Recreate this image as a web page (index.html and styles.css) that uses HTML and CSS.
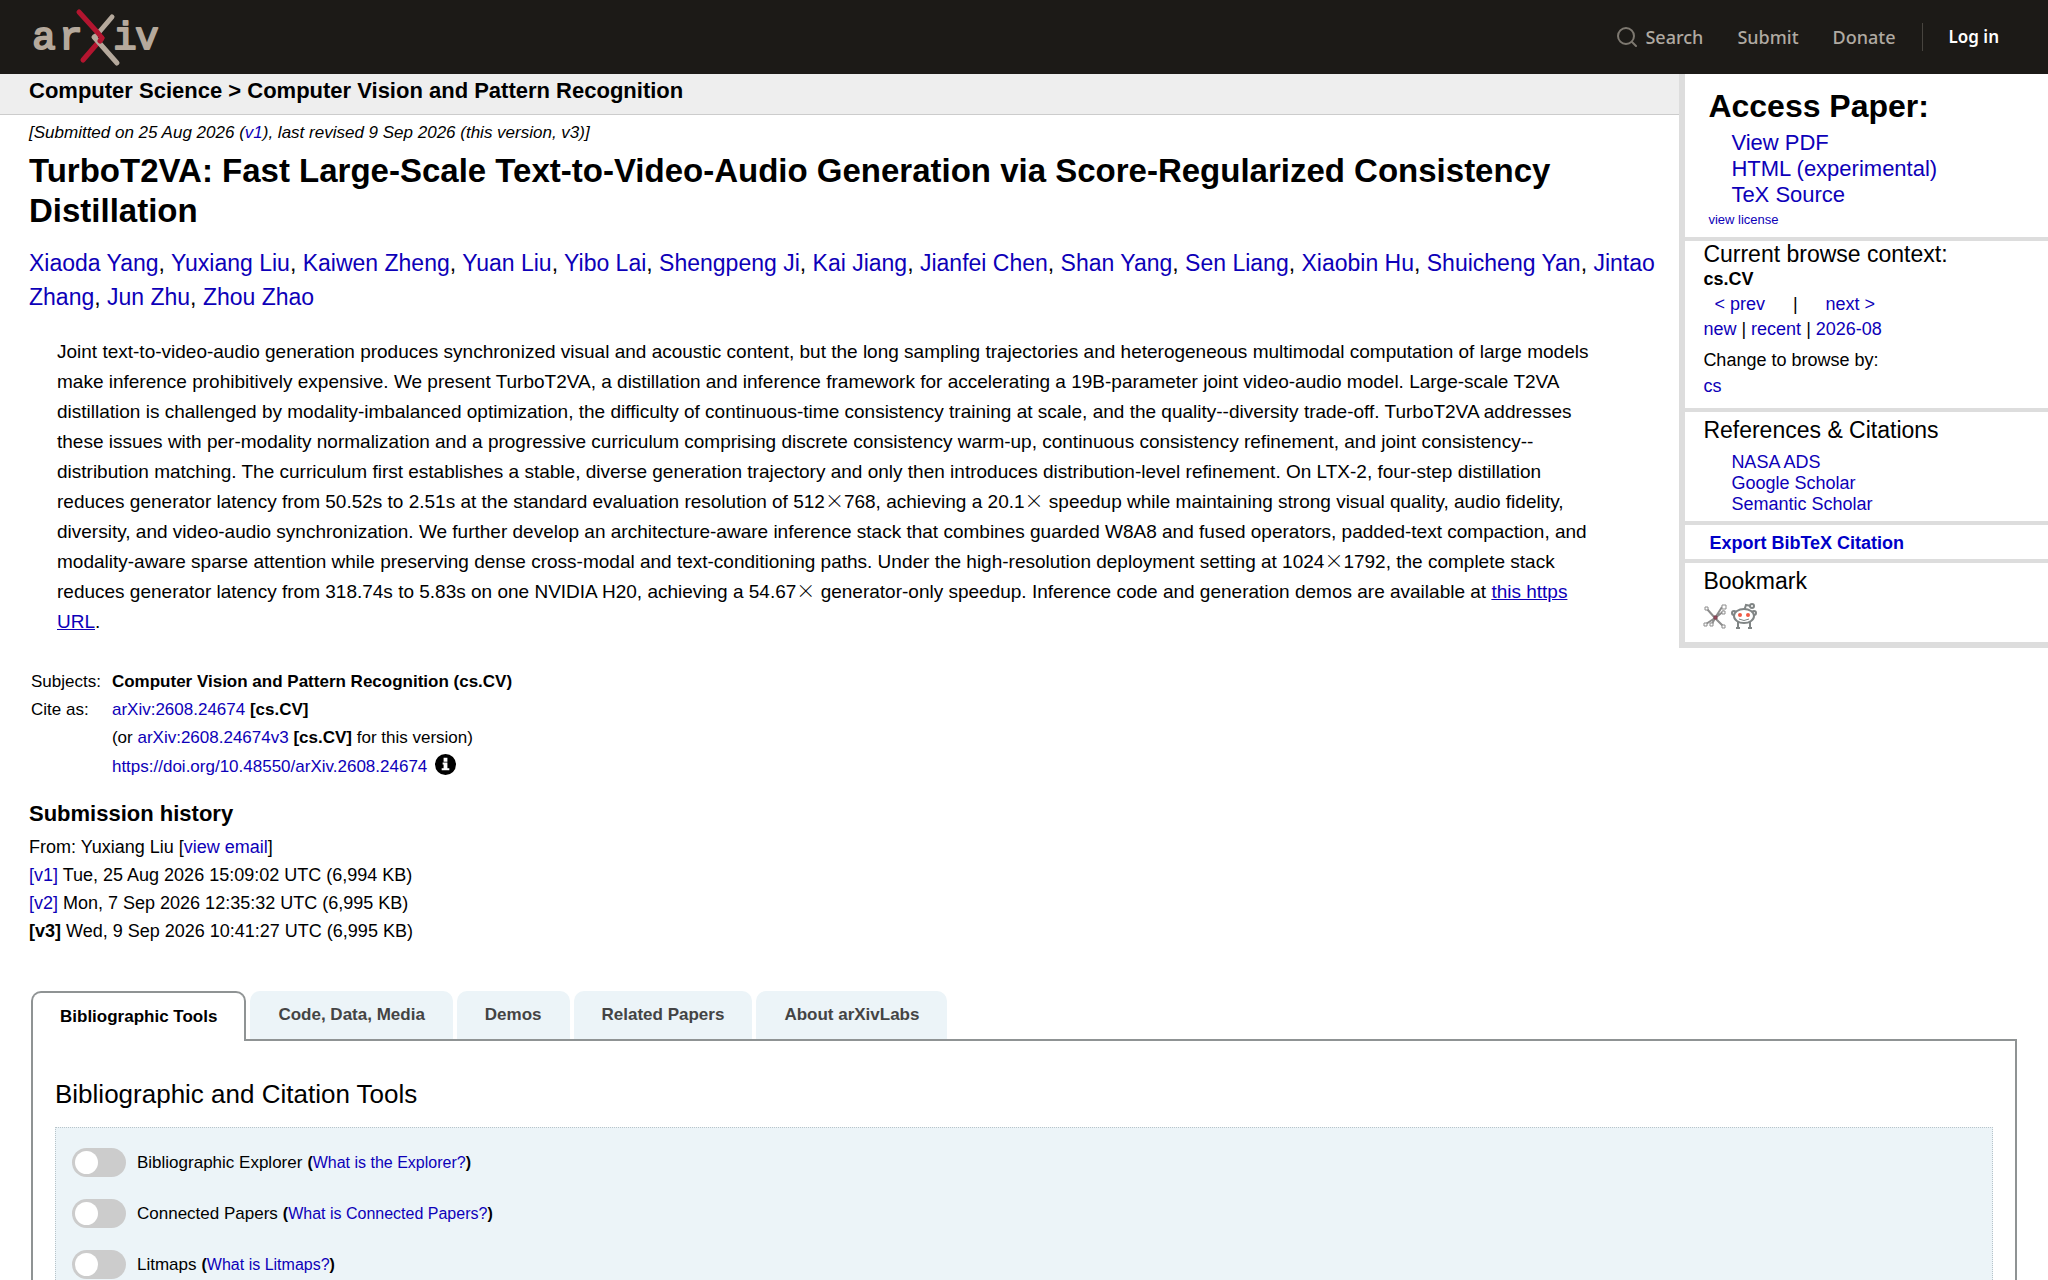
FILE: index.html
```html
<!DOCTYPE html>
<html lang="en">
<head>
<meta charset="utf-8">
<title>TurboT2VA: Fast Large-Scale Text-to-Video-Audio Generation</title>
<link rel="stylesheet" href="styles.css">
</head>
<body>
<header class="topbar">
  <a class="logo" href="#" aria-label="arXiv">
    <svg width="136" height="74" viewBox="24 0 136 74">
      <g class="logo-text">
        <text x="44" y="49">a</text>
        <text x="71" y="49">r</text>
        <text x="125" y="49">i</text>
        <text x="147" y="49">v</text>
      </g>
      <g fill="none" stroke-width="5" stroke-linecap="round" stroke-linejoin="round">
        <path stroke="#b5a99c" d="M112 17 95 37"/>
        <path stroke="#b3152f" d="M83 60 102 38"/>
        <path stroke="#b5a99c" d="M94 37 117 63"/>
        <path stroke="#b3152f" d="M79 12 98 33 102 38 100 41"/>
      </g>
    </svg>
  </a>
  <nav class="topnav">
    <a href="#" class="search-link">
      <svg width="20" height="20" viewBox="0 0 20 20" fill="none" stroke="#7d7870" stroke-width="2"><circle cx="9" cy="9" r="8"/><path d="M15 15l4 4" stroke-linecap="round"/></svg>
      Search</a>
    <a href="#">Submit</a>
    <a href="#">Donate</a>
    <a href="#" class="login">Log in</a>
  </nav>
</header>

<div class="layout">
  <main class="main">
    <h2 class="subject-bar">Computer Science &gt; Computer Vision and Pattern Recognition</h2>
    <article class="paper">
      <p class="dateline">[Submitted on 25 Aug 2026 (<a href="#">v1</a>), last revised 9 Sep 2026 (this version, v3)]</p>
      <h1 class="title">TurboT2VA: Fast Large-Scale Text-to-Video-Audio Generation via Score-Regularized Consistency Distillation</h1>
      <p class="authors"><a href="#">Xiaoda Yang</a>, <a href="#">Yuxiang Liu</a>, <a href="#">Kaiwen Zheng</a>, <a href="#">Yuan Liu</a>, <a href="#">Yibo Lai</a>, <a href="#">Shengpeng Ji</a>, <a href="#">Kai Jiang</a>, <a href="#">Jianfei Chen</a>, <a href="#">Shan Yang</a>, <a href="#">Sen Liang</a>, <a href="#">Xiaobin Hu</a>, <a href="#">Shuicheng Yan</a>, <a href="#">Jintao Zhang</a>, <a href="#">Jun Zhu</a>, <a href="#">Zhou Zhao</a></p>
      <blockquote class="abstract">Joint text-to-video-audio generation produces synchronized visual and acoustic content, but the long sampling trajectories and heterogeneous multimodal computation of large models make inference prohibitively expensive. We present TurboT2VA, a distillation and inference framework for accelerating a 19B-parameter joint video-audio model. Large-scale T2VA distillation is challenged by modality-imbalanced optimization, the difficulty of continuous-time consistency training at scale, and the quality--diversity trade-off. TurboT2VA addresses these issues with per-modality normalization and a progressive curriculum comprising discrete consistency warm-up, continuous consistency refinement, and joint consistency--distribution matching. The curriculum first establishes a stable, diverse generation trajectory and only then introduces distribution-level refinement. On LTX-2, four-step distillation reduces generator latency from 50.52s to 2.51s at the standard evaluation resolution of 512<span class="times">×</span>768, achieving a 20.1<span class="times">×</span> speedup while maintaining strong visual quality, audio fidelity, diversity, and video-audio synchronization. We further develop an architecture-aware inference stack that combines guarded W8A8 and fused operators, padded-text compaction, and modality-aware sparse attention while preserving dense cross-modal and text-conditioning paths. Under the high-resolution deployment setting at 1024<span class="times">×</span>1792, the complete stack reduces generator latency from 318.74s to 5.83s on one NVIDIA H20, achieving a 54.67<span class="times">×</span> generator-only speedup. Inference code and generation demos are available at <a href="#">this https URL</a>.</blockquote>
      <table class="meta">
        <tr><th scope="row">Subjects:</th><td><b>Computer Vision and Pattern Recognition (cs.CV)</b></td></tr>
        <tr><th scope="row">Cite as:</th><td><a href="#">arXiv:2608.24674</a> <b>[cs.CV]</b></td></tr>
        <tr><th></th><td>(or <a href="#">arXiv:2608.24674v3</a> <b>[cs.CV]</b> for this version)</td></tr>
        <tr><th></th><td class="doi"><a href="#">https://doi.org/10.48550/arXiv.2608.24674</a><svg width="21" height="21" viewBox="0 0 22 22"><circle cx="11" cy="11" r="11"/><path fill="#fff" d="M9 4h4v4H9zM8 9h5v6h2v2H7v-2h2v-4H8z"/></svg></td></tr>
      </table>
      <section class="history">
        <h2>Submission history</h2>
        <div>From: Yuxiang Liu [<a href="#">view email</a>]</div>
        <div><a href="#">[v1]</a> Tue, 25 Aug 2026 15:09:02 UTC (6,994 KB)</div>
        <div><a href="#">[v2]</a> Mon, 7 Sep 2026 12:35:32 UTC (6,995 KB)</div>
        <div><b>[v3]</b> Wed, 9 Sep 2026 10:41:27 UTC (6,995 KB)</div>
      </section>
    </article>
  </main>

  <aside class="side">
    <section class="access">
      <h2>Access Paper:</h2>
      <ul>
        <li><a href="#">View PDF</a></li>
        <li><a href="#">HTML (experimental)</a></li>
        <li><a href="#">TeX Source</a></li>
      </ul>
      <a class="license" href="#">view license</a>
    </section>
    <section class="browse">
      <h3>Current browse context:</h3>
      <b class="context">cs.CV</b>
      <div class="prevnext"><a href="#">&lt; prev</a><span>|</span><a href="#">next &gt;</a></div>
      <div class="recent"><a href="#">new</a> | <a href="#">recent</a> | <a href="#">2026-08</a></div>
      <div class="change">Change to browse by:</div>
      <a class="archive" href="#">cs</a>
    </section>
    <section class="refs">
      <h3>References &amp; Citations</h3>
      <ul>
        <li><a href="#">NASA ADS</a></li>
        <li><a href="#">Google Scholar</a></li>
        <li><a href="#">Semantic Scholar</a></li>
      </ul>
    </section>
    <section class="export"><button type="button">Export BibTeX Citation</button></section>
    <section class="bookmark">
      <h3>Bookmark</h3>
      <div class="marks">
        <a href="#" aria-label="BibSonomy"><svg width="24" height="28" viewBox="0 0 24 28" fill="none" stroke="#8d8d8d" stroke-width="1"><path stroke-width="2" d="M4 7l8 9 8 8M12 16l9-7M12 16l-9 6M12 16l7-11M12 16l-3 6"/><g fill="#fff"><path d="M2 5h3v3H2zM19 3h4v4h-4zM19 9h3v3h-3zM1 21h3v3H1zM7 21h3v3H7zM19 23h3v3h-3z"/></g><path fill="#9b4a5e" stroke="#7a4552" d="M11 14h3v3h-3z"/></svg></a>
        <a href="#" aria-label="Reddit"><svg width="28" height="28" viewBox="0 0 28 28" fill="#fff" stroke="#808585" stroke-width="2"><path fill="none" d="M14 9l2-6 5 1"/><circle cx="22" cy="4" r="2"/><path d="M8 20v6M6 26h4M20 20v6M18 26h4"/><circle cx="4" cy="11" r="2"/><circle cx="24" cy="11" r="2"/><ellipse cx="14" cy="14" rx="10" ry="7"/><path fill="none" stroke-width="1" d="M9 17q5 3 10 0"/><g fill="#f05a45" stroke="none"><circle cx="10" cy="13" r="2"/><circle cx="18" cy="13" r="2"/></g></svg></a>
      </div>
    </section>
  </aside>
</div>

<section class="labs">
  <div class="tabs" role="tablist">
    <button type="button" role="tab" class="tab active" aria-selected="true">Bibliographic Tools</button>
    <button type="button" role="tab" class="tab">Code, Data, Media</button>
    <button type="button" role="tab" class="tab">Demos</button>
    <button type="button" role="tab" class="tab">Related Papers</button>
    <button type="button" role="tab" class="tab">About arXivLabs</button>
  </div>
  <div class="panel" role="tabpanel">
    <h2>Bibliographic and Citation Tools</h2>
    <div class="tools">
      <div class="tool"><input type="checkbox" id="explorer" class="switch"><label for="explorer">Bibliographic Explorer</label> <span class="what">(<a href="#">What is the Explorer?</a>)</span></div>
      <div class="tool"><input type="checkbox" id="connected" class="switch"><label for="connected">Connected Papers</label> <span class="what">(<a href="#">What is Connected Papers?</a>)</span></div>
      <div class="tool"><input type="checkbox" id="litmaps" class="switch"><label for="litmaps">Litmaps</label> <span class="what">(<a href="#">What is Litmaps?</a>)</span></div>
    </div>
  </div>
</section>
</body>
</html>
```
FILE: styles.css
```css
* { box-sizing: border-box; }
html { overflow: hidden; height: 100%; }
body {
  margin: 0;
  height: 100%;
  overflow: hidden;
  background: #fff;
  color: #000;
  font-family: "Liberation Sans", Arial, sans-serif;
  font-size: 18px;
  line-height: 28px;
}
a { color: #0d00b8; text-decoration: none; }
h1, h2, h3, p, ul, blockquote { margin: 0; padding: 0; }
ul { list-style: none; }
button { font: inherit; border: 0; background: none; cursor: pointer; }

/* Top bar */
.topbar {
  display: flex;
  justify-content: space-between;
  align-items: center;
  height: 74px;
  padding: 0 49px 0 24px;
  background: #1c1a17;
}
.logo, .logo svg { display: block; }
.logo-text {
  font-family: "Liberation Mono", monospace;
  font-size: 39px;
  text-anchor: middle;
  fill: #b5a99c;
  stroke: #b5a99c;
  stroke-width: 2;
  stroke-linejoin: round;
}
.topnav { display: flex; align-items: center; gap: 34px; }
.topnav a {
  color: #b0aaa2;
  font-family: "Noto Sans", sans-serif;
  font-size: 18px;
  font-weight: 500;
}
.topnav .search-link { display: flex; align-items: center; gap: 8px; }
.topnav .login {
  padding-left: 26px;
  margin-left: -8px;
  border-left: 1px solid #47443f;
  color: #fff;
  font-size: 17px;
  font-weight: 600;
}

/* Two-column layout */
.layout { display: flex; align-items: flex-start; }
.main { flex: 1; min-width: 0; }
.subject-bar {
  height: 41px;
  padding: 3px 29px;
  border-bottom: 1px solid #ccc;
  background: #eee;
  font-size: 22px;
}
.paper { padding: 0 20px 0 29px; }
.dateline { padding-top: 4px; font-size: 17px; font-style: italic; }
.title { margin-top: 4px; font-size: 33px; line-height: 40px; }
.authors { margin-top: 15px; font-size: 23px; line-height: 34px; }
.abstract {
  margin: 23px 60px 0 28px;
  font-size: 19px;
  line-height: 30px;
}
.abstract a { text-decoration: underline; }
.times { font-family: "Noto Sans CJK SC", sans-serif; font-weight: 300; line-height: 1; }

.meta { margin-top: 31px; border-spacing: 2px 0; font-size: 17px; }
.meta th, .meta td { padding: 0 9px 0 0; text-align: left; font-weight: 400; }
.meta .doi { padding-top: 1px; }
.doi a { margin-right: 8px; }
.doi svg { vertical-align: -3px; }
.history { margin-top: 19px; }
.history h2 { margin-bottom: 5px; font-size: 22px; }

/* Sidebar */
.side {
  width: 18%;
  border: solid #ddd;
  border-width: 0 0 6px 6px;
}
.side section { padding: 0 18px; border-top: 4px solid #ddd; }
.side h3 { font-size: 23px; font-weight: 400; line-height: 26px; }
.side .access { padding: 14px 23px 5px; border-top: 0; }
.access h2 { font-size: 32px; line-height: 36px; }
.access ul { padding: 6px 0 0 23px; font-size: 22px; line-height: 26px; }
.license { display: block; font-size: 13px; line-height: 24px; }
.context, .archive { display: block; line-height: 24px; }
.prevnext { display: flex; gap: 28px; padding-left: 11px; line-height: 26px; }
.recent { line-height: 25px; }
.change { padding-top: 4px; }
.side .browse { padding-bottom: 10px; }
.side .refs { padding-top: 5px; padding-bottom: 6px; }
.refs h3 { padding-bottom: 9px; }
.refs ul { padding-left: 28px; line-height: 21px; }
.side .export { padding: 4px 24px 2px; }
.export button { display: block; padding: 0; color: #0000c8; font-weight: 700; }
.side .bookmark { padding-top: 5px; padding-bottom: 12px; }
.bookmark h3 { padding-bottom: 8px; }
.marks { display: flex; gap: 3px; }
.marks svg { display: block; }

/* arXivLabs tabs */
.labs { margin: 46px 31px 0; }
.tabs { display: flex; align-items: flex-start; gap: 4px; }
.tab {
  height: 48px;
  padding: 0 28px;
  border-radius: 10px 10px 0 0;
  background: #ecf4f8;
  color: #444;
  font-size: 17px;
  font-weight: 700;
}
.tab.active {
  height: 50px;
  margin-bottom: -2px;
  padding: 0 27px;
  border: 2px solid #8f9394;
  border-bottom: 0;
  background: #fff;
  color: #000;
  z-index: 1;
}
.panel { padding: 36px 22px 0; border: 2px solid #8f9394; }
.panel h2 { padding-bottom: 16px; font-size: 26px; font-weight: 400; line-height: 34px; }
.tools { padding: 9px 16px; border: 1px dotted #b8c4ca; background: #ecf4f8; }
.tool { display: flex; align-items: center; height: 51px; font-size: 17px; }
.tool label { margin: 0 5px 0 11px; }
.what { font-size: 16px; font-weight: 700; }
.what a { font-weight: 400; }
.switch {
  appearance: none;
  display: flex;
  align-items: center;
  width: 54px;
  height: 29px;
  margin: 0;
  padding: 3px;
  border-radius: 15px;
  background: #ccc;
}
.switch::before { content: ""; width: 23px; height: 23px; border-radius: 50%; background: #fff; }
```
